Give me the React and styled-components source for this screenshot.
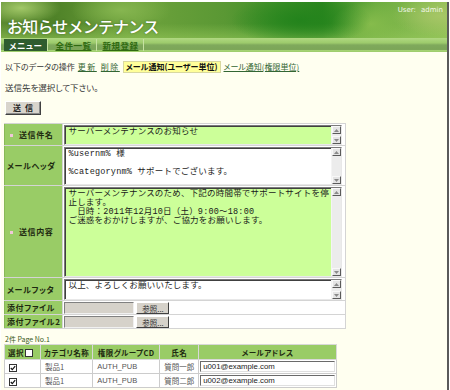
import React from 'react';
import styled, { createGlobalStyle } from 'styled-components';

const jp = `"Noto Sans CJK JP", "DejaVu Sans", sans-serif`;
const mono = `"Liberation Mono", "Noto Sans CJK JP", monospace`;

const GlobalStyle = createGlobalStyle`
  body {
    margin: 0;
    background: #ffffff;
  }
`;

const Page = styled.div`
  width: 446px;
  height: 388px;
  margin: 2px 0 0 1px;
  background: #fffff0;
  border-right: 2px solid #5a5a5a;
  font-family: ${jp};
  overflow: hidden;
`;

const Header = styled.div`
  height: 36px;
  display: flex;
  justify-content: space-between;
  padding: 0 4px 0 5px;
  background:
    radial-gradient(ellipse 40px 16px at 20px 6px, #a2c868, transparent),
    radial-gradient(ellipse 50px 20px at 120px 8px, #86b650, transparent),
    radial-gradient(ellipse 70px 26px at 300px 18px, #23831c, transparent),
    radial-gradient(ellipse 40px 22px at 370px 22px, #86bc4c, transparent),
    radial-gradient(ellipse 50px 20px at 440px 14px, #a6c666, transparent),
    linear-gradient(180deg, transparent 60%, rgba(150, 200, 90, 0.55)),
    linear-gradient(90deg, #5b8a30, #4f8228 12%, #6ea23c 30%, #5a9834 50%, #3f9028 62%, #2b861e 72%, #6cac40 84%, #93c058);
`;

const Title = styled.h1`
  align-self: flex-end;
  margin: 0 0 2px 1px;
  font-size: 16px;
  font-weight: 500;
  letter-spacing: -0.8px;
  line-height: 20px;
  color: #ffffff;
  text-shadow: 0 0 2px rgba(40, 70, 20, 0.6);
`;

const User = styled.span`
  margin-top: 4px;
  font-family: "DejaVu Sans", sans-serif;
  font-size: 7px;
  color: #f4f8ec;
  word-spacing: 3px;
`;

const Nav = styled.div`
  height: 14px;
  display: flex;
  padding: 1px 0 0 3px;
  box-sizing: border-box;
  background: linear-gradient(180deg, #b0d882 0, #9dcb6c 35%, #7fa95c 50%, #7ca658 82%, #a6d276 88%, #9ccc6a 100%);
`;

const Tab = styled.a`
  height: 12px;
  padding: 0 5px;
  font-size: 8.5px;
  font-weight: bold;
  line-height: 12px;
  font-feature-settings: "palt";
  letter-spacing: 0.5px;
  color: ${p => (p.$active ? '#ffffff' : '#2f6a10')};
  background: ${p => (p.$active ? '#2f5c2e' : 'transparent')};
  text-decoration: ${p => (p.$active ? 'none' : 'underline')};
  border-right: 1px solid #c6e2a2;
  margin-right: ${p => (p.$active ? '2px' : '0')};
`;

const Content = styled.div`
  padding: 0 0 0 4px;
`;

const OpLine = styled.div`
  margin-top: 9px;
  display: flex;
  align-items: center;
  gap: 2px;
  font-size: 8px;
  line-height: 10px;
  font-feature-settings: "palt";
  color: #333333;
`;

const OpLink = styled.a`
  color: #336633;
  text-decoration: underline;
  letter-spacing: ${p => (p.$spaced ? '1.5px' : '0')};
  padding: 0 ${p => (p.$current ? '2px' : '0')};
  background: ${p => (p.$current ? '#ffff99' : 'transparent')};
  border: 1px solid ${p => (p.$current ? '#d8d8a0' : 'transparent')};
  ${p => p.$current && 'text-decoration: none; color: #111; font-weight: bold;'}
`;

const Note = styled.p`
  margin: 9px 0 0;
  font-size: 8.5px;
  line-height: 10px;
  font-feature-settings: "palt";
  color: #333333;
`;

const SendButton = styled.button`
  margin-top: 7px;
  width: 36px;
  height: 14px;
  padding: 0;
  font-family: ${jp};
  font-size: 8px;
  font-weight: bold;
  letter-spacing: 4px;
  text-indent: 4px;
  line-height: 10px;
  color: #222;
  background: #d8d4cc;
  border: 1px solid;
  border-color: #ffffff #404040 #404040 #ffffff;
  box-shadow: inset -1px -1px 0 #8a8a8a;
`;

const FormTable = styled.table`
  margin: 7px 0 0 -1px;
  width: 338px;
  border-collapse: collapse;
  border: 1px solid #d0d0d0;
`;

const Label = styled.th`
  width: 55px;
  padding: 0 2px;
  background: #99cc66;
  border: 1px solid #d4d4d4;
  border-left: 1px solid #88b858;
  text-align: left;
  font-size: 8px;
  font-weight: bold;
  font-feature-settings: "palt";
  letter-spacing: 0.6px;
  color: #1e2a10;
  white-space: nowrap;
`;

const Required = styled.span`
  display: inline-block;
  width: 3px;
  height: 3px;
  margin: 0 6px 1px 3px;
  background: #f0c8d8;
  vertical-align: middle;
`;

const Cell = styled.td`
  padding: 1px 3px 0 1px;
  background: #ffffff;
  border: 1px solid #d4d4d4;
`;

const Field = styled.div`
  display: flex;
  height: ${p => p.$h}px;
  box-sizing: border-box;
  border: 1px solid;
  border-color: #7a7a7a #e8e8e8 #e8e8e8 #7a7a7a;
  box-shadow: inset 1px 1px 0 #404040;
  background: ${p => (p.$green ? '#ccff99' : '#ffffff')};
`;

const FieldText = styled.div`
  flex: 1;
  padding: 2px 2px 0 3px;
  font-family: ${mono};
  font-size: 8.5px;
  line-height: 9px;
  letter-spacing: 0.2px;
  color: #1a1a1a;
  white-space: pre;
  overflow: hidden;
`;

const Scroll = styled.div`
  width: 9px;
  display: flex;
  flex-direction: column;
  justify-content: space-between;
  background: #ececec;
  border-left: 1px solid #f4f4f4;
`;

const ScrollBtn = styled.div`
  height: 8px;
  display: grid;
  place-items: center;
  box-sizing: border-box;
  background: #e4e4e4;
  border: 1px solid;
  border-color: #f8f8f8 #5a5a5a #5a5a5a #f8f8f8;
`;

const FileRow = styled.div`
  display: flex;
  gap: 2px;
  height: 12px;
`;

const FileBox = styled.div`
  width: 70px;
  box-sizing: border-box;
  background: #d6d2ca;
  border: 1px solid;
  border-color: #808080 #f0f0f0 #f0f0f0 #808080;
`;

const BrowseButton = styled.button`
  width: 33px;
  height: 12px;
  padding: 0;
  font-family: ${jp};
  font-size: 7.5px;
  line-height: 9px;
  color: #333;
  background: #d6d2ca;
  border: 1px solid;
  border-color: #ffffff #404040 #404040 #ffffff;
`;

const Count = styled.div`
  margin-top: 6px;
  font-size: 7px;
  line-height: 9px;
  color: #3a5a1a;
`;

const ListTable = styled.table`
  margin: 0 0 0 -1px;
  width: 333px;
  border-collapse: collapse;
  border: 1px solid #c8c8c8;
`;

const Head = styled.th`
  width: ${p => p.$w}px;
  height: 14px;
  padding: 0 3px;
  background: #99cc66;
  border: 1px solid #d8d8d8;
  font-size: 7.5px;
  font-weight: bold;
  font-feature-settings: "palt";
  letter-spacing: 0.4px;
  text-align: ${p => (p.$left ? 'left' : 'center')};
  color: #1e2a10;
  white-space: nowrap;
`;

const Td = styled.td`
  height: 13px;
  padding: 0 4px;
  background: #ffffff;
  border: 1px solid #cccccc;
  font-family: ${p => (p.$latin ? '"Liberation Sans", sans-serif' : jp)};
  font-size: 7.5px;
  color: #555555;
  white-space: nowrap;
`;

const MailCell = styled.td`
  padding: 1px 1px;
  background: #ffffff;
  border: 1px solid #cccccc;
`;

const MailInput = styled.div`
  height: 11px;
  box-sizing: border-box;
  padding-left: 2px;
  border: 1px solid;
  border-color: #6a6a6a #e0e0e0 #e0e0e0 #6a6a6a;
  font-family: "Liberation Sans", sans-serif;
  font-size: 7.8px;
  line-height: 9px;
  color: #222;
`;

const Check = styled.span`
  display: inline-grid;
  place-items: center;
  width: 8px;
  height: 8px;
  box-sizing: border-box;
  vertical-align: middle;
  background: #ffffff;
  border: 1px solid #333;
  margin-left: ${p => (p.$inline ? '1px' : '0')};
`;

function Arrow({ down }) {
  return (
    <svg width="5" height="3" viewBox="0 0 5 3">
      <polygon points={down ? '0,0 5,0 2.5,3' : '0,3 5,3 2.5,0'} fill="#8a8a8a" />
    </svg>
  );
}

function Scrollbar() {
  return (
    <Scroll>
      <ScrollBtn><Arrow /></ScrollBtn>
      <ScrollBtn><Arrow down /></ScrollBtn>
    </Scroll>
  );
}

function TextField({ h, green, children }) {
  return (
    <Field $h={h} $green={green}>
      <FieldText>{children}</FieldText>
      <Scrollbar />
    </Field>
  );
}

function CheckBox({ checked, inline }) {
  return (
    <Check $inline={inline}>
      {checked && (
        <svg width="6" height="6" viewBox="0 0 6 6">
          <polyline points="0.8,3 2.3,4.6 5.2,1.2" fill="none" stroke="#111" strokeWidth="1.2" />
        </svg>
      )}
    </Check>
  );
}

const body = `サーバーメンテナンスのため、下記の時間帯でサポートサイトを停
止します。
　日時：2011年12月10日（土）9:00～18:00
ご迷惑をおかけしますが、ご協力をお願いします。`;

const users = [
  { name: '質問一郎', mail: 'u001@example.com' },
  { name: '質問二郎', mail: 'u002@example.com' },
];

export default function App() {
  return (
    <Page>
      <GlobalStyle />
      <Header>
        <Title>お知らせメンテナンス</Title>
        <User>User: admin</User>
      </Header>
      <Nav>
        <Tab $active>メニュー</Tab>
        <Tab>全件一覧</Tab>
        <Tab>新規登録</Tab>
      </Nav>

      <Content>
        <OpLine>
          <span>以下のデータの操作</span>
          <OpLink $spaced>更新</OpLink>
          <OpLink $spaced>削除</OpLink>
          <OpLink $current>メール通知(ユーザー単位)</OpLink>
          <OpLink>メール通知(権限単位)</OpLink>
        </OpLine>
        <Note>送信先を選択して下さい。</Note>
        <SendButton>送信</SendButton>

        <FormTable>
          <tbody>
            <tr>
              <Label><Required />送信件名</Label>
              <Cell><TextField h={20} green>サーバーメンテナンスのお知らせ</TextField></Cell>
            </tr>
            <tr>
              <Label>メールヘッダ</Label>
              <Cell><TextField h={38}>{'%usernm% 様\n\n%categorynm% サポートでございます。'}</TextField></Cell>
            </tr>
            <tr>
              <Label><Required />送信内容</Label>
              <Cell><TextField h={90} green>{body}</TextField></Cell>
            </tr>
            <tr>
              <Label>メールフッタ</Label>
              <Cell><TextField h={21}>以上、よろしくお願いいたします。</TextField></Cell>
            </tr>
            <tr>
              <Label>添付ファイル</Label>
              <Cell><FileRow><FileBox /><BrowseButton>参照...</BrowseButton></FileRow></Cell>
            </tr>
            <tr>
              <Label>添付ファイル2</Label>
              <Cell><FileRow><FileBox /><BrowseButton>参照...</BrowseButton></FileRow></Cell>
            </tr>
          </tbody>
        </FormTable>

        <Count>2件 Page No.1</Count>
        <ListTable>
          <thead>
            <tr>
              <Head $w={29} $left>選択<CheckBox inline /></Head>
              <Head $w={45}>カテゴリ名称</Head>
              <Head $w={60}>権限グループCD</Head>
              <Head $w={32}>氏名</Head>
              <Head>メールアドレス</Head>
            </tr>
          </thead>
          <tbody>
            {users.map(u => (
              <tr key={u.mail}>
                <Td><CheckBox checked /></Td>
                <Td>製品1</Td>
                <Td $latin>AUTH_PUB</Td>
                <Td>{u.name}</Td>
                <MailCell><MailInput>{u.mail}</MailInput></MailCell>
              </tr>
            ))}
          </tbody>
        </ListTable>
      </Content>
    </Page>
  );
}
